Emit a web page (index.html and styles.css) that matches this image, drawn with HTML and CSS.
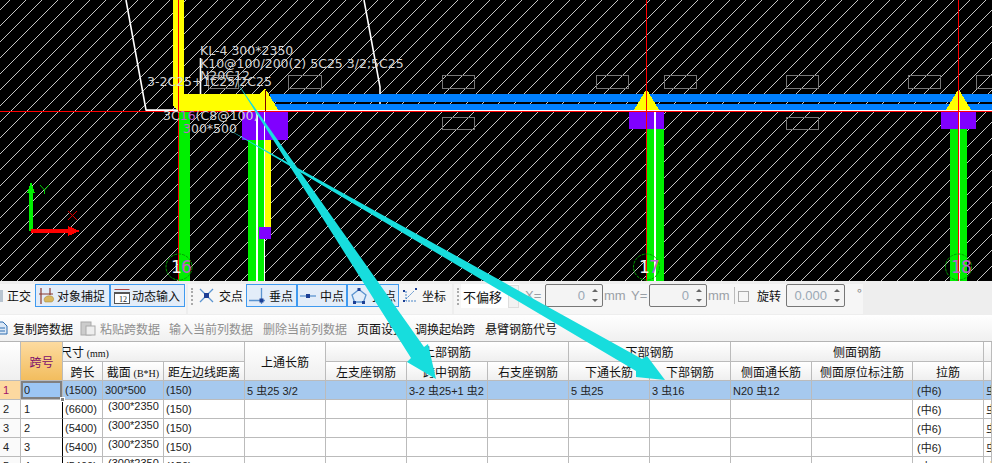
FILE: index.html
```html
<!DOCTYPE html>
<html lang="zh">
<head>
<meta charset="utf-8">
<title>梁平法表格</title>
<link rel="stylesheet" href="styles.css">
</head>
<body>
<div class="page">
  <svg class="cad" width="992" height="281" viewBox="0 0 992 281">
    <defs>
      <pattern id="hatch" width="16" height="16" patternUnits="userSpaceOnUse">
        <path class="hatch-line" d="M10 0L0 10M16 10L10 16"/>
      </pattern>
    </defs>
    <rect class="bg" width="992" height="281"/>
    <rect class="hatch" width="992" height="281"/>
    <g class="marks">
      <rect x="208" y="75.5" width="30" height="13"/>
      <rect x="288.5" y="75.5" width="33" height="13"/>
      <rect x="442.5" y="75.5" width="32" height="13"/>
      <rect x="442.5" y="117.5" width="32" height="12"/>
      <rect x="596.5" y="75.5" width="32" height="13"/>
      <rect x="664.5" y="75.5" width="32" height="13"/>
      <rect x="786.5" y="75.5" width="32" height="13"/>
      <rect x="786.5" y="117.5" width="32" height="12"/>
      <rect x="908.5" y="75.5" width="32" height="13"/>
      <rect x="976.5" y="75.5" width="32" height="13"/>
    </g>
    <path class="wall" d="M126 0L146 110H178M364 0L380 87V110M200.500 58V94"/>
    <rect class="blue" x="270" y="94" width="722" height="8"/>
    <rect class="blue" x="270" y="104" width="722" height="6"/>
    <rect class="white" x="146" y="110" width="846" height="1"/>
    <rect class="green" x="178" y="111" width="12" height="170"/>
    <rect class="green" x="248" y="130" width="8" height="151"/>
    <rect class="green" x="258" y="130" width="6" height="151"/>
    <rect class="white" x="256" y="112" width="2" height="169"/>
    <rect class="white" x="264" y="112" width="1" height="169"/>
    <rect class="yellow" x="265" y="130" width="6" height="98"/>
    <rect class="purple" x="242" y="112" width="46" height="28"/>
    <rect class="white" x="256" y="112" width="2" height="28"/>
    <rect class="white" x="264" y="112" width="1" height="28"/>
    <rect class="purple" x="259" y="227" width="12" height="12"/>
    <rect class="yellow" x="173" y="0" width="11" height="106"/>
    <polygon class="yellow" points="173,94 260,94 265,88 278,110 178,111 173,106"/>
    <rect class="darkred" x="265" y="90" width="1" height="21"/>

    <rect class="green" x="647" y="129" width="17" height="152"/>
    <rect class="purple" x="629" y="112" width="35" height="17"/>
    <rect class="white" x="654" y="112" width="2" height="169"/>
    <polygon class="yellow" points="646.500,89 634,110 659,110"/>

    <rect class="green" x="950" y="129" width="17" height="152"/>
    <rect class="purple" x="941" y="112" width="35" height="17"/>
    <rect class="white" x="958" y="112" width="2" height="169"/>
    <polygon class="yellow" points="958.500,89 946,110 971,110"/>

    <rect class="red" x="178" y="0" width="1" height="281"/>
    <rect class="red" x="646" y="0" width="1" height="281"/>
    <rect class="red" x="958" y="0" width="1" height="281"/>
    <rect class="red" x="0" y="111" width="992" height="1"/>

    <g class="axis-grid">
      <circle cx="179" cy="267" r="13"/>
      <circle cx="646.500" cy="267" r="13"/>
      <circle cx="958.500" cy="267" r="13"/>
    </g>
    <text class="num" x="171" y="273">1</text><text class="num num-p" x="181" y="273">6</text>
    <text class="num" x="639" y="273">1</text><text class="num num-p" x="649" y="273">7</text>
    <text class="num num-p" x="951" y="273">1</text><text class="num num-p" x="961" y="273">8</text>

    <rect class="green" x="29" y="190" width="4" height="41"/>
    <polygon class="green" points="31,182 27,193 35,193"/>
    <rect class="red" x="31" y="229" width="40" height="4"/>
    <polygon class="red" points="80,231 68,226 68,236"/>
    <path class="axis-y" d="M40 185L44.500 190L49 185M44.500 190V194"/>
    <path class="axis-x" d="M68 211L77 220M77 211L68 220"/>

    <text class="label" x="200" y="55">KL-4 300*2350</text>
    <text class="label" x="200" y="68">K10@100/200(2) 5C25 3/2;5C25</text>
    <text class="label" x="200" y="80">N20C12</text>
    <text class="label" x="147" y="86">3-2C25+1C25/2C25</text>
    <text class="label" x="163" y="120">3C<tspan class="label-p">16</tspan>(C8@100)</text>
    <text class="label" x="183" y="133"><tspan class="label-p">3</tspan>00*500</text>
  </svg>

  <div class="bar bar-one">
    <div class="group group-a">
      <span class="stub"></span>
      <span class="tool tool-ortho">正交</span>
      <span class="toggle toggle-wide">
        <svg class="ico" width="16" height="18" viewBox="0 0 16 18"><path class="i-red" d="M2 1V17M11 1V8M0 7H14"/><path class="i-gold" d="M6 15C3 11 8 8 12 9C16 10 15 15 12 15Z"/></svg>
        对象捕捉
      </span>
      <span class="toggle toggle-wide">
        <svg class="ico" width="16" height="16" viewBox="0 0 16 16"><path class="i-redthin" d="M0.500 1.500H15.500"/><rect class="i-box" x="0.500" y="5.500" width="15" height="10"/><path class="i-dark" d="M0 4.500H16"/><text class="i-num" x="5" y="14">12</text></svg>
        动态输入
      </span>
    </div>
    <div class="group group-b">
      <span class="grip"></span>
      <span class="tool tool-cross">
        <svg class="ico" width="15" height="15" viewBox="0 0 15 15"><path class="i-blue" d="M1 1L14 14M14 1L1 14"/><rect class="i-sq" x="5" y="5" width="5" height="5"/></svg>
        交点
      </span>
      <span class="toggle toggle-perp">
        <svg class="ico" width="16" height="16" viewBox="0 0 16 16"><path class="i-blue" d="M0 12.500H16M12.500 0V16"/><rect class="i-sq" x="10.500" y="10.500" width="4" height="4"/></svg>
        垂点
      </span>
      <span class="toggle toggle-mid">
        <svg class="ico" width="16" height="16" viewBox="0 0 16 16"><path class="i-blue" d="M0 8H16"/><rect class="i-sq" x="6" y="6" width="4" height="4"/></svg>
        中点
      </span>
      <span class="toggle toggle-apex">
        <svg class="ico" width="16" height="16" viewBox="0 0 16 16"><path class="i-blue" d="M8 1.500L15 7L12.500 14H3.500L1 7Z"/><rect class="i-sq" x="6.500" y="0" width="3" height="3"/><rect class="i-sq" x="2" y="13" width="3" height="3"/><rect class="i-sq" x="11" y="13" width="3" height="3"/></svg>
        顶点
      </span>
      <span class="tool tool-coord">
        <svg class="ico" width="16" height="16" viewBox="0 0 16 16"><path class="i-dash" d="M4 3V13H15M4 11L12 3"/><rect class="i-sq" x="1" y="2" width="2" height="2"/><rect class="i-sq" x="13" y="0" width="2" height="2"/><rect class="i-sq" x="1" y="12" width="2" height="2"/></svg>
        坐标
      </span>
    </div>
    <div class="group group-c">
      <span class="grip"></span>
      <span class="select"><span class="select-value">不偏移</span><span class="select-arrow"></span></span>
      <span class="dim dim-x">X=</span>
      <span class="num-input"><span class="num-value">0</span><span class="spin"></span></span>
      <span class="unit">mm</span>
      <span class="dim dim-y">Y=</span>
      <span class="num-input"><span class="num-value">0</span><span class="spin"></span></span>
      <span class="unit">mm</span>
      <span class="sep"></span>
      <span class="check"></span>
      <span class="tool tool-rot">旋转</span>
      <span class="num-input num-rot"><span class="num-value">0.000</span><span class="spin"></span></span>
      <span class="deg">°</span>
    </div>
  </div>

  <div class="bar bar-two">
    <svg class="ico copy-ico" width="8" height="14" viewBox="0 0 8 14"><path class="i-copy" d="M-4 1H3L7 5V13H-4Z"/><path class="i-copyl" d="M-2 7H5M-2 10H5"/></svg>
    <span class="cmd">复制跨数据</span>
    <svg class="ico paste-ico" width="16" height="16" viewBox="0 0 16 16"><rect class="i-paste" x="1" y="2" width="10" height="13"/><rect class="i-paste2" x="6" y="6" width="9" height="9"/></svg>
    <span class="cmd cmd-off">粘贴跨数据</span>
    <span class="cmd cmd-off cmd-tight">输入当前列数据</span>
    <span class="cmd cmd-off">删除当前列数据</span>
    <span class="cmd">页面设置</span>
    <span class="cmd">调换起始跨</span>
    <span class="cmd">悬臂钢筋代号</span>
  </div>

  <table class="grid">
    <colgroup>
      <col class="c-n"><col class="c-a"><col class="c-b"><col class="c-c"><col class="c-d"><col class="c-d"><col class="c-d"><col class="c-d"><col class="c-d"><col class="c-d"><col class="c-d"><col class="c-d"><col class="c-e"><col class="c-f"><col>
    </colgroup>
    <thead>
      <tr class="head-top">
        <th rowspan="2"></th>
        <th rowspan="2" class="span-head">跨号</th>
        <th colspan="3" class="size-head">尺寸 <span class="small-latin">(mm)</span></th>
        <th rowspan="2">上通长筋</th>
        <th colspan="3">上部钢筋</th>
        <th colspan="2">下部钢筋</th>
        <th colspan="3">侧面钢筋</th>
        <th></th>
      </tr>
      <tr class="head-sub">
        <th>跨长</th><th>截面 <span class="small-latin">(B*H)</span></th><th>距左边线距离</th>
        <th>左支座钢筋</th><th>跨中钢筋</th><th>右支座钢筋</th>
        <th>下通长筋</th><th>下部钢筋</th>
        <th>侧面通长筋</th><th>侧面原位标注筋</th><th>拉筋</th><th></th>
      </tr>
    </thead>
    <tbody>
      <tr class="row-on">
        <td class="rn rn-on">1</td><td class="cur">0<span class="handle"></span></td><td>(1500)</td><td>300*500</td><td>(150)</td>
        <td>5 虫25 3/2</td><td></td><td>3-2 虫25+1 虫2</td><td></td><td>5 虫25</td><td>3 虫16</td><td>N20 虫12</td><td></td><td class="tie">(中6)</td><td>虫</td>
      </tr>
      <tr>
        <td class="rn">2</td><td class="mark">1</td><td>(6600)</td><td class="sec">(300*2350</td><td>(150)</td>
        <td></td><td></td><td></td><td></td><td></td><td></td><td></td><td></td><td class="tie">(中6)</td><td>虫</td>
      </tr>
      <tr>
        <td class="rn">3</td><td class="mark">2</td><td>(5400)</td><td class="sec">(300*2350</td><td>(150)</td>
        <td></td><td></td><td></td><td></td><td></td><td></td><td></td><td></td><td class="tie">(中6)</td><td>虫</td>
      </tr>
      <tr>
        <td class="rn">4</td><td class="mark">3</td><td>(5400)</td><td class="sec">(300*2350</td><td>(150)</td>
        <td></td><td></td><td></td><td></td><td></td><td></td><td></td><td></td><td class="tie">(中6)</td><td>虫</td>
      </tr>
      <tr>
        <td class="rn">5</td><td class="mark">4</td><td>(5400)</td><td class="sec">(300*2350</td><td>(150)</td>
        <td></td><td></td><td></td><td></td><td></td><td></td><td></td><td></td><td class="tie">(中6)</td><td>虫</td>
      </tr>
    </tbody>
  </table>

  <svg class="arrows" width="992" height="463" viewBox="0 0 992 463">
    <polygon class="arrow" points="236,81 424,347 428,344 436,379 407,362 411,358"/>
    <polygon class="arrow" points="224,127 642,359 647,356 665,380 636,377 636,371"/>
  </svg>
</div>
</body>
</html>
```
FILE: styles.css
```css
* { box-sizing: border-box; }
html, body { margin: 0; padding: 0; background: #f0f0f0; }
body { width: 992px; height: 463px; overflow: hidden; font: 12px "Noto Sans CJK SC", "Liberation Sans", sans-serif; color: #111; }
.page { position: relative; width: 992px; height: 463px; overflow: hidden; }

/* CAD canvas */
.cad { display: block; }
.cad rect, .cad polygon { shape-rendering: crispEdges; }
.bg { fill: #000; }
.hatch { fill: url(#hatch); }
.hatch-line { fill: none; stroke: #c4c4c4; stroke-width: 1; }
.marks rect { fill: none; stroke: #777; stroke-width: 1; }
.wall { fill: none; stroke: #fff; stroke-width: 1.6; }
.blue { fill: #0080ff; }
.white { fill: #fff; }
.green { fill: #00f000; }
.yellow { fill: #ffff00; }
.purple { fill: #8000ff; }
.red { fill: #ff0000; }
.darkred { fill: #800000; }
.axis-grid circle { fill: none; stroke: #00a000; stroke-width: 1; stroke-dasharray: 3 1; }
.num { font: 17px "DejaVu Sans", sans-serif; fill: #f4f4f4; }
.num-p { fill: #c060d0; }
.axis-y { fill: none; stroke: #00d000; stroke-width: 1; }
.axis-x { fill: none; stroke: #e00000; stroke-width: 1; }
.label { font: 12.5px "DejaVu Sans", sans-serif; fill: #d4d4d4; }
.label-p { fill: #c060d0; }

/* tool bars */
.bar { display: flex; align-items: center; }
.bar-one { height: 34px; background: #eee; align-items: stretch; padding-top: 3px; padding-bottom: 1px; }
.group { display: flex; align-items: flex-start; background: #f6f6f6; height: 30px; }
.group-a { width: 186px; margin-right: 2px; }
.group-b { width: 264px; margin-right: 2px; padding-left: 3px; }
.group-c { width: 409px; padding-left: 3px; }
.stub { width: 3px; height: 12px; margin-top: 6px; background: #b8c4d0; }
.tool { display: flex; align-items: center; height: 23px; white-space: nowrap; }
.tool-ortho { margin-left: 4px; margin-right: 4px; }
.toggle { display: flex; align-items: center; height: 23px; border: 1px solid #3f9af0; background: #e3edf9; white-space: nowrap; }
.toggle-wide { width: 75px; padding-left: 3px; gap: 2px; }
.ico { display: block; flex: none; }
.grip { width: 2px; height: 17px; margin-top: 4px; border-left: 2px dotted #aaa; }
.tool-cross { margin-left: 6px; width: 47px; gap: 5px; }
.toggle-perp { width: 51px; padding-left: 2px; gap: 4px; }
.toggle-mid { width: 50px; padding-left: 2px; gap: 4px; }
.toggle-apex { width: 52px; padding-left: 3px; gap: 5px; }
.tool-coord { margin-left: 3px; gap: 4px; }
.select { display: flex; justify-content: space-between; align-items: center; width: 58px; height: 24px; margin-left: 2px; background: #fff; padding-left: 2px; font-size: 13px; }
.select-value { color: #111; }
.select-arrow { width: 11px; height: 23px; border: 1px solid #ddd; background: #f2f2f2; }
.dim, .unit { font: 13px "Liberation Sans", sans-serif; color: #9aa0a6; line-height: 23px; }
.dim-x { margin-left: 6px; width: 20px; }
.dim-y { margin-left: 1px; width: 18px; }
.unit { width: 26px; margin-left: 1px; }
.num-input { display: flex; align-items: center; justify-content: flex-end; width: 58px; height: 23px; border: 1px solid #777; border-radius: 2px; background: #f4f4f4; font: 13px "Liberation Sans", sans-serif; color: #9aa8b4; }
.num-value { margin-right: 7px; }
.spin { display: flex; flex-direction: column; justify-content: space-between; width: 7px; height: 13px; margin-right: 3px; }
.spin::before, .spin::after { content: ""; display: block; width: 0; height: 0; border-left: 3.5px solid transparent; border-right: 3.5px solid transparent; }
.spin::before { border-bottom: 3px solid #666; }
.spin::after { border-top: 3px solid #666; }
.sep { width: 1px; height: 17px; margin: 3px 3px 0 0; background: #bbb; }
.check { width: 11px; height: 11px; margin-top: 7px; border: 1px solid #aaa; background: #f6f6f6; }
.tool-rot { margin-left: 8px; width: 29px; }
.num-rot { width: 59px; }
.deg { margin-left: 12px; color: #888; font-size: 13px; }

.bar-two { height: 26px; padding-left: 0; background: linear-gradient(#fff, #f0f0f0); }
.cmd { margin-left: 10px; white-space: nowrap; color: #111; }
.cmd-off { color: #8f8f8f; }
.cmd-tight { margin-left: 9px; }
.copy-ico { margin-right: -5px; }
.paste-ico { margin-left: 7px; margin-right: -6px; }
.i-red { fill: none; stroke: #8a3a30; stroke-width: 1.2; }
.i-redthin { fill: none; stroke: #b04040; stroke-width: 1; }
.i-gold { fill: #d8b860; stroke: #a08030; stroke-width: 0.5; }
.i-box { fill: #fff; stroke: #555; stroke-width: 1; }
.i-dark { fill: none; stroke: #555; stroke-width: 1; }
.i-num { font: 8px "Liberation Serif", serif; fill: #222; }
.i-blue { fill: none; stroke: #5b94d0; stroke-width: 1.3; }
.i-sq { fill: #1c3f95; }
.i-dash { fill: none; stroke: #4a86c8; stroke-width: 1; stroke-dasharray: 2 1; }
.i-copy { fill: #dbe8f6; stroke: #2d6cb0; stroke-width: 1; }
.i-copyl { fill: none; stroke: #2d6cb0; stroke-width: 1; }
.i-paste { fill: #ccc; stroke: #aaa; stroke-width: 1; }
.i-paste2 { fill: #eee; stroke: #aaa; stroke-width: 1; }

/* grid */
.grid { width: 992px; table-layout: fixed; border-collapse: separate; border-spacing: 0; border-top: 1px solid #b4b4b4; background: #fff; }
.c-n { width: 21px; }
.c-a { width: 42px; }
.c-b { width: 40px; }
.c-c { width: 61px; }
.c-d { width: 81px; }
.c-e { width: 101px; }
.c-f { width: 71px; }
.grid th, .grid td { padding: 0; border-right: 1px solid #bbb; border-bottom: 1px solid #bbb; overflow: hidden; white-space: nowrap; }
.grid th { font-weight: 400; font-size: 12px; text-align: center; background: linear-gradient(#fff, #efefef); color: #111; }
.head-top th { height: 20px; }
.head-sub th { height: 19px; }
.small-latin { font: 10px "Liberation Serif", serif; }
.grid .span-head { background: linear-gradient(#fddba0, #f2bd5e); color: #7b0d6c; }
.grid .size-head { text-align: left; text-indent: -3px; }
.grid td { height: 19px; padding-left: 2px; font: 11px "Liberation Sans", "Noto Sans CJK SC", sans-serif; color: #222; vertical-align: middle; }
.grid .rn { background: #fafafa; padding-left: 3px; }
.grid .rn-on { background: #fcd9a0; color: #a0106a; }
.row-on td { background: #a6c9ee; }
.grid .cur { position: relative; overflow: visible; background: #9cc6f4; box-shadow: inset 0 0 0 2px #808080; padding-left: 3px; }
.handle { position: absolute; right: -3px; bottom: -3px; width: 5px; height: 5px; background: #808080; border: 1px solid #fff; }
.grid .mark { border-right-color: #000; padding-left: 3px; }
.grid .sec { padding-left: 5px; vertical-align: top; }
.grid .tie { padding-left: 4px; }

/* annotation overlay */
.arrows { position: absolute; left: 0; top: 0; pointer-events: none; }
.arrow { fill: #17dddd; }
```
